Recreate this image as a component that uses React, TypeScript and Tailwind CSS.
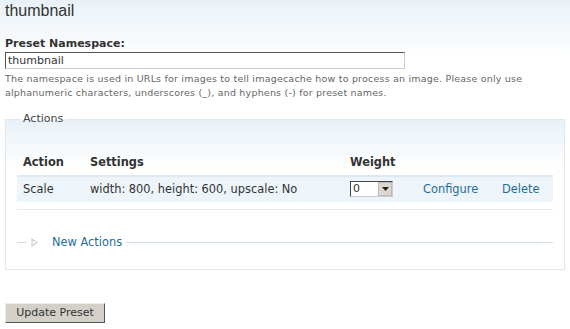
import React from 'react'

function App() {
  return (
    <div
      className="w-[570px] h-[329px] overflow-hidden bg-gradient-to-b from-[#e9f1f8] to-white to-[60px] text-[#333]"
      style={{ fontFamily: '"DejaVu Sans", Verdana, sans-serif' }}
    >
      <h1 className="px-[5px] pt-[1px] text-[16px] leading-[20px] font-light text-[#333]" style={{ fontFamily: '"Liberation Sans", Arial, sans-serif' }}>
        thumbnail
      </h1>

      <div className="px-[5px] mt-[16px]">
        <label className="block text-[11px] font-bold leading-[14px] text-[#333]">Preset Namespace:</label>
        <input
          defaultValue="thumbnail"
          className="mt-[1px] block w-[400px] h-[17px] px-[2px] text-[11px] leading-[13px] bg-white border border-[#ccc] border-t-[#555] border-l-[#555] outline-none"
        />
        <p className="mt-[3px] text-[9.5px] leading-[14px] text-[#666] tracking-[0.2px]">
          The namespace is used in URLs for images to tell imagecache how to process an image. Please only use alphanumeric characters, underscores (_), and hyphens (-) for preset names.
        </p>
      </div>

      <fieldset className="mx-[5px] mt-[11px] h-[159px] border border-[#dde8f0] bg-gradient-to-b from-[#e9f1f8] to-white to-[50px] px-[11px]">
        <legend className="ml-[4px] px-[2px] text-[11px] text-[#444]">Actions</legend>

        <table className="w-full mt-[22px] text-[11.4px] border-collapse">
          <thead>
            <tr className="border-b-2 border-[#dce8f2]">
              <th className="text-left font-bold py-[4px] pl-[6px] w-[73px]">Action</th>
              <th className="text-left font-bold py-[4px] w-[260px]">Settings</th>
              <th className="text-left font-bold py-[4px] w-[73px]">Weight</th>
              <th className="w-[79px]"></th>
              <th></th>
            </tr>
          </thead>
          <tbody>
            <tr className="bg-[#edf5fa] h-[26px]">
              <td className="pl-[6px]">Scale</td>
              <td>width: 800, height: 600, upscale: No</td>
              <td>
                <div className="flex w-[43px] h-[16px] border border-[#ccc] border-t-[#444] border-l-[#444] bg-white">
                  <span className="flex-1 pl-[2px] text-[11px] leading-[14px]">0</span>
                  <span className="w-[14px] h-[14px] bg-[#dcd8d0] border border-[#bbb] flex items-center justify-center">
                    <svg width="7" height="4" viewBox="0 0 7 4"><path d="M0 0h7L3.5 4z" fill="#222" /></svg>
                  </span>
                </div>
              </td>
              <td><a className="text-[#1f6d99]">Configure</a></td>
              <td><a className="text-[#1f6d99]">Delete</a></td>
            </tr>
          </tbody>
        </table>
        <div className="mt-[7px] h-px bg-[#e1eaf1]"></div>

        <div className="flex items-center mt-[24px]">
          <span className="w-[10px] h-px bg-[#cfdde8]"></span>
          <svg width="14" height="9" viewBox="0 0 14 9" className="ml-[3px]">
            <path d="M2 1l5 3.5L2 8z" fill="none" stroke="#c9d4dc" strokeWidth="1.2" />
          </svg>
          <span className="ml-[8px] text-[11.4px] text-[#1f6d99]">New Actions</span>
          <span className="flex-1 ml-[4px] h-px bg-[#cfdde8]"></span>
        </div>
      </fieldset>

      <div className="px-[5px] mt-[29px]">
        <button className="h-[20px] w-[100px] text-[11px] text-[#333] bg-[#d4d0c8] border border-[#eee] border-r-[#555] border-b-[#555]">
          Update Preset
        </button>
      </div>
    </div>
  )
}

export default App
